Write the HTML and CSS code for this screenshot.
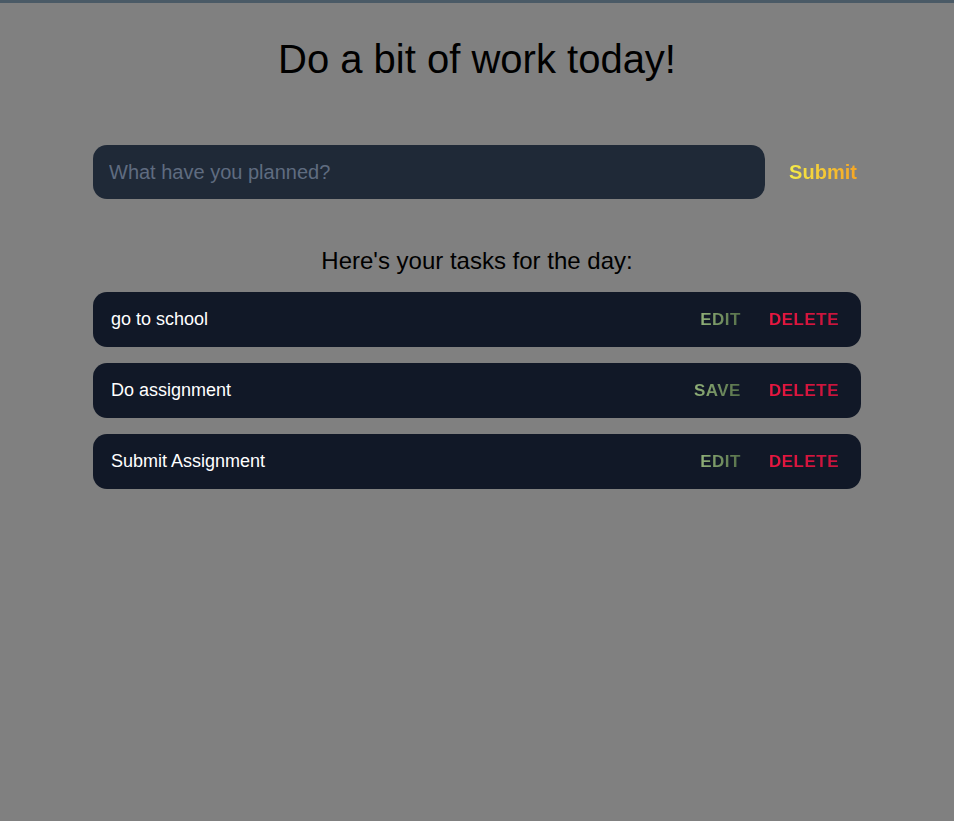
FILE: index.html
```html
<!DOCTYPE html>
<html>
<head>
<meta charset="utf-8">
<link rel="stylesheet" href="styles.css">
</head>
<body>
<div class="topbar"></div>
<main class="app">
  <h1 class="title">Do a bit of work today!</h1>
  <form class="new-task">
    <input class="task-input" type="text" placeholder="What have you planned?">
    <button class="submit" type="button"><span class="grad-yellow">Submit</span></button>
  </form>
  <h2 class="subtitle">Here's your tasks for the day:</h2>
  <ul class="tasks">
    <li class="task">
      <span class="task-text">go to school</span>
      <div class="actions">
        <button class="act"><span class="grad-green">EDIT</span></button>
        <button class="act"><span class="grad-red">DELETE</span></button>
      </div>
    </li>
    <li class="task">
      <span class="task-text">Do assignment</span>
      <div class="actions">
        <button class="act"><span class="grad-green">SAVE</span></button>
        <button class="act"><span class="grad-red">DELETE</span></button>
      </div>
    </li>
    <li class="task">
      <span class="task-text">Submit Assignment</span>
      <div class="actions">
        <button class="act"><span class="grad-green">EDIT</span></button>
        <button class="act"><span class="grad-red">DELETE</span></button>
      </div>
    </li>
  </ul>
</main>
</body>
</html>
```
FILE: styles.css
```css
html, body {
  margin: 0;
  padding: 0;
  background: #808080;
  font-family: "Liberation Sans", Arial, sans-serif;
  min-height: 100%;
}
.topbar {
  height: 3px;
  background: #4a5a66;
}
.app {
  width: 768px;
  margin: 0 auto;
  display: flex;
  flex-direction: column;
}
.title {
  margin: 34px 0 0;
  font-size: 40px;
  font-weight: 400;
  text-align: center;
  color: #000;
  line-height: 44px;
}
.new-task {
  margin-top: 64px;
  display: flex;
  align-items: center;
  gap: 0;
}
.task-input {
  width: 672px;
  height: 54px;
  box-sizing: border-box;
  border: none;
  border-radius: 14px;
  background: #1f2937;
  padding: 0 16px;
  font-family: inherit;
  font-size: 20px;
  color: #fff;
  outline: none;
}
.task-input::placeholder {
  color: #5f6c80;
}
.submit {
  flex: 1;
  background: none;
  border: none;
  font-family: inherit;
  font-size: 20px;
  font-weight: 700;
  padding: 0 0 0 20px;
  text-align: center;
  cursor: pointer;
}
.grad-yellow, .grad-green, .grad-red {
  -webkit-background-clip: text;
  background-clip: text;
  color: transparent;
}
.grad-yellow {
  background-image: linear-gradient(90deg, #f4ec48, #f5a524);
}
.grad-green {
  background-image: linear-gradient(90deg, #90b078, #56704a);
}
.grad-red {
  background-image: linear-gradient(90deg, #e8173f, #c8143c);
}
.subtitle {
  margin: 48px 0 0;
  font-size: 24px;
  font-weight: 400;
  text-align: center;
  line-height: 28px;
  color: #000;
}
.tasks {
  list-style: none;
  margin: 17px 0 0;
  padding: 0;
  display: flex;
  flex-direction: column;
  gap: 16px;
}
.task {
  height: 55px;
  box-sizing: border-box;
  background: #111827;
  border-radius: 14px;
  display: flex;
  align-items: center;
  justify-content: space-between;
  padding: 0 22px 0 18px;
}
.task-text {
  color: #fff;
  font-size: 18px;
}
.actions {
  display: flex;
  gap: 28px;
}
.act {
  background: none;
  border: none;
  padding: 0;
  font-family: inherit;
  font-size: 17px;
  font-weight: 700;
  letter-spacing: 0.5px;
  cursor: pointer;
}
```
